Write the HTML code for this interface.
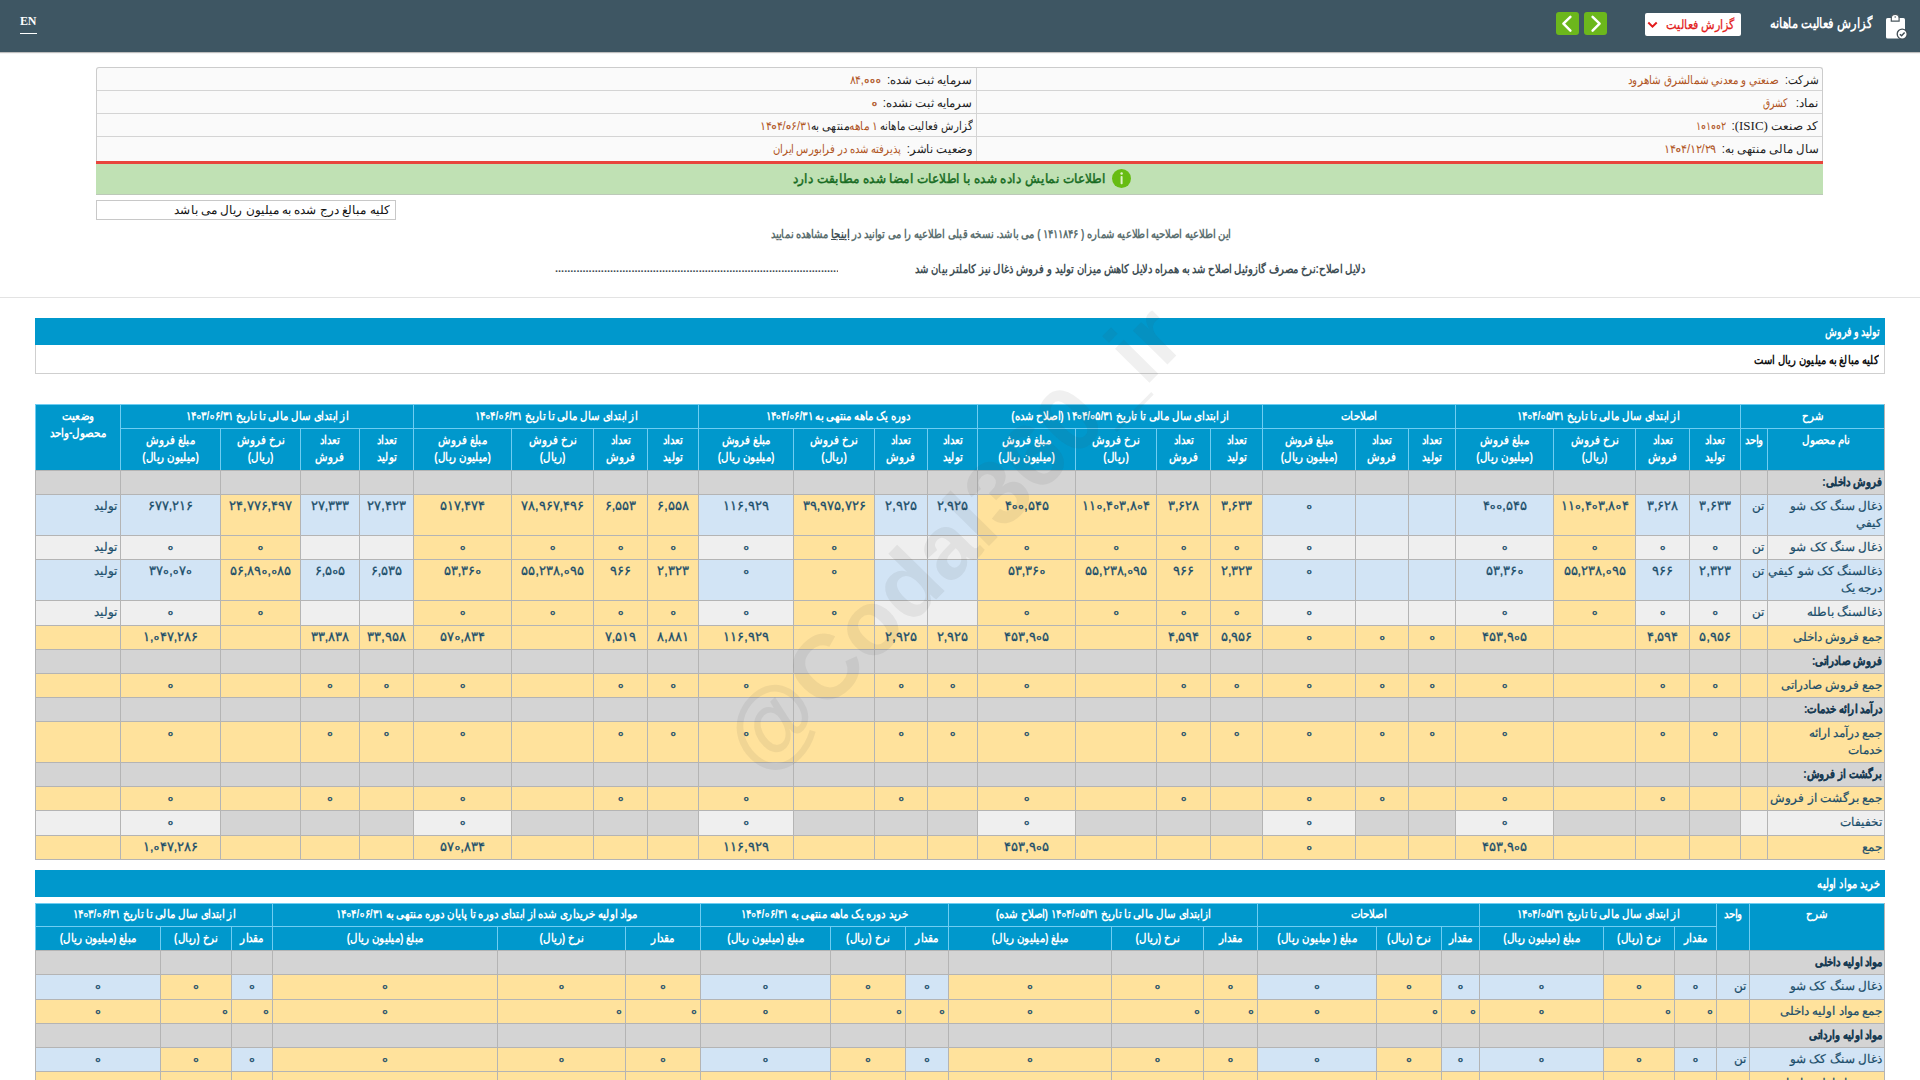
<!DOCTYPE html>
<html lang="fa"><head><meta charset="utf-8"><title>گزارش فعالیت ماهانه</title>
<style>
html,body{margin:0;padding:0}
body{width:1920px;height:1080px;overflow:hidden;background:#fff;position:relative;font-family:"Liberation Sans",sans-serif;font-size:12px;color:#1b4e6a}
#hdr{position:absolute;left:0;top:0;width:1920px;height:52px;background:#3e5663;box-shadow:0 1px 1px rgba(0,0,0,.25)}
#en{position:absolute;left:20px;top:14px;width:16.5px;height:19px;font-family:"Liberation Serif",serif;font-size:12px;font-weight:bold;line-height:15px;color:#fff;border-bottom:1px solid #fff;letter-spacing:-.2px}
#ttl{position:absolute;right:48px;top:13px;height:22px;line-height:22px;color:#fff;font-weight:bold;font-size:13.5px;white-space:nowrap;direction:rtl;transform:scaleX(.83);transform-origin:right center}
#sel{position:absolute;left:1645px;top:13px;width:96px;height:23px;background:#fff;border-radius:2px}
#sel span{position:absolute;right:7px;top:0;line-height:22px;color:#e31b1b;font-size:13px;white-space:nowrap;direction:rtl;transform:scaleX(.87);transform-origin:right center}
.btn{position:absolute;top:12px;width:23px;height:23px;background:#6cb71c;border-radius:3px}
#info{position:absolute;left:96px;top:67px;width:1727px;height:94px;box-sizing:border-box;border:1px solid #ccc;border-bottom:none;border-radius:3px 3px 0 0;background:#fafafa}
#info .r{position:absolute;left:0;width:1725px;height:22px;border-bottom:1px solid #d4d4d4}
#info .v{position:absolute;left:879px;top:0;width:1px;height:93px;background:#d4d4d4}
.f{position:absolute;white-space:nowrap;direction:rtl;line-height:22px;height:22px;color:#222;font-size:12px;transform:scaleX(.86);transform-origin:right center}
.f i{font-style:normal;color:#b0551f}
#red{position:absolute;left:96px;top:161px;width:1727px;height:3px;background:#e8443c}
#grn{position:absolute;left:96px;top:164px;width:1727px;height:31px;box-sizing:border-box;background:#c0e1b4;border-bottom:1px solid #bcc9b8}
#grn .tx{position:absolute;right:718px;top:4px;line-height:22px;white-space:nowrap;direction:rtl;color:#176b22;font-weight:bold;font-size:12.5px;transform:scaleX(.813);transform-origin:right center}
#grn .ic{position:absolute;left:1016px;top:5px;width:19px;height:19px;border-radius:50%;background:#67bc13}
#unit{position:absolute;left:96px;top:200px;width:300px;height:20px;box-sizing:border-box;border:1px solid #c8c8c8;background:#fff}
#unit span{position:absolute;right:5px;top:0;line-height:18px;white-space:nowrap;direction:rtl;color:#111;font-size:12px}
.cl{position:absolute;left:0;width:1920px;text-align:center;direction:rtl;white-space:nowrap;font-weight:bold;font-size:12px;line-height:20px}
.cl span{display:inline-block;transform:scaleX(.833);transform-origin:center}
#hr{position:absolute;left:0;top:297px;width:1920px;height:1px;background:#e3e3e3}
.sec{position:absolute;left:35px;width:1850px;height:27px;background:#0098cc}
.bx2{position:absolute;right:5px;top:3px;line-height:21px;color:#fff;font-weight:bold;font-size:12.5px;white-space:nowrap;direction:rtl;transform:scaleX(.8);transform-origin:right center}
#note{position:absolute;left:35px;top:345px;width:1850px;height:29px;box-sizing:border-box;border:1px solid #cfcfcf;border-top:none;background:#fff}
#note span{position:absolute;right:6px;top:3px;line-height:21px;color:#111;font-weight:bold;font-size:12px;white-space:nowrap;direction:rtl;transform:scaleX(.83);transform-origin:right center}
#t1{position:absolute;left:35px;top:404px;width:1850px}
#t2{position:absolute;left:35px;top:903px;width:1850px}
#sec2{top:870px}
table.t{table-layout:fixed;border-collapse:separate;border-spacing:0;border-right:1px solid #b4b4b4;border-bottom:1px solid #b4b4b4;direction:rtl}
table.t th,table.t td{box-sizing:border-box;border-left:1px solid #b4b4b4;border-top:1px solid #b4b4b4;padding:3px 3px 0 3px;line-height:17px;vertical-align:top;font-size:12px;white-space:nowrap;overflow:visible}
table.t th{background:#0098cc;color:#fff;border-left-color:#6fcdf2;border-top-color:#6fcdf2;font-weight:bold;text-align:center;padding:3px 0 0 0}
.hx{margin:0 -40px;text-align:center;transform:scaleX(.853);transform-origin:center}
td.y{background:#ffe29c}
td.b{background:#d2e4f5}
td.g{background:#d4d4d4}
td.l{background:#efefef}
td.c{text-align:center}
table.t td{-webkit-text-stroke:.2px currentColor}
td.rr{text-align:right}
td.nm{text-align:right;padding-right:0}
td.nm>*{margin-right:-1px}
td.u{text-align:right;padding-right:1px}
td.st{text-align:right}
.d{direction:ltr;unicode-bidi:bidi-override;display:inline-block}
.n{direction:ltr;unicode-bidi:bidi-override;display:inline-block;font-size:12.5px;-webkit-text-stroke:.3px currentColor}
.z{font-style:normal;font-family:"Liberation Sans",sans-serif;font-weight:bold;font-size:8px;line-height:1px;vertical-align:.6px;margin:0 .7px;-webkit-text-stroke:.25px currentColor}
.bx{font-weight:bold;white-space:nowrap;transform:scaleX(.85);transform-origin:right center;color:#173a52}
#wm{position:absolute;left:552px;top:488px;width:800px;height:100px;line-height:100px;text-align:center;font-weight:bold;font-size:91.5px;color:rgba(60,60,60,.08);transform:rotate(-45.5deg);transform-origin:center;white-space:nowrap;pointer-events:none;letter-spacing:0}

.a{position:absolute;line-height:20px;height:20px;white-space:nowrap;direction:rtl;transform-origin:right center}
.sf{font-family:"Liberation Serif",serif;font-size:13px}
.dots{position:absolute;left:555px;top:258px;width:283px;height:20px;line-height:20px;overflow:hidden;text-align:right;font-size:11px;font-weight:bold;direction:ltr;color:#3f4f55;white-space:nowrap}

tr.h1 th{padding-top:2px}

</style></head>
<body>
<div id="hdr">
 <div id="en">EN</div>
 <svg style="position:absolute;left:1883px;top:12px" width="28" height="30" viewBox="0 0 28 30">
  <rect x="3" y="6" width="19" height="20.5" rx="1.6" fill="#fff"/>
  <path d="M8.3 9.2 V6.2 a3.9 3.9 0 0 1 7.8 0 V9.2 Z" fill="#fff" stroke="#4a575e" stroke-width="1.2"/>
  <circle cx="12.2" cy="5" r=".8" fill="#56646b"/>
  <circle cx="19.2" cy="22.1" r="5" fill="#fff" stroke="#414d54" stroke-width="1.3"/>
  <path d="M16.9 22.2 l1.7 1.6 l3-3.2" fill="none" stroke="#414d54" stroke-width="1.5"/>
 </svg>
 <div id="sel">
  <svg style="position:absolute;left:2px;top:8px" width="11" height="8" viewBox="0 0 11 8"><path d="M1.3 1.5 L5.5 5.6 L9.7 1.5" fill="none" stroke="#e31b1b" stroke-width="2"/></svg>
 </div>
 <div class="btn" style="left:1584px"><svg width="23" height="23" viewBox="0 0 23 23"><path d="M8.6 4.8 L15.6 11.6 L8.6 18.6" fill="none" stroke="#fff" stroke-width="2.5" stroke-linecap="round" stroke-linejoin="round"/></svg></div>
 <div class="btn" style="left:1556px"><svg width="23" height="23" viewBox="0 0 23 23"><path d="M14.4 4.8 L7.4 11.6 L14.4 18.6" fill="none" stroke="#fff" stroke-width="2.5" stroke-linecap="round" stroke-linejoin="round"/></svg></div>
</div>
<div id="info">
 <div class="r" style="top:0"></div><div class="r" style="top:23px"></div><div class="r" style="top:46px"></div><div class="r" style="top:69px;border-bottom:none"></div>
 <div class="v"></div>
</div>
<div id="red"></div>
<div id="grn"><div class="ic"><svg width="19" height="19" viewBox="0 0 19 19"><circle cx="9.6" cy="4.6" r="1.25" fill="#dff3c8"/><rect x="8.6" y="7" width="2" height="8.2" rx=".8" fill="#dff3c8"/></svg></div></div>
<div id="unit"></div>
<div class="dots">....................................................................................................</div>
<div id="hr"></div>
<div class="sec" style="top:318px"></div>
<div id="note"></div>

<div id="t1"><table class=t dir=rtl style="width:1850px"><colgroup><col style="width:117px"><col style="width:27px"><col style="width:51px"><col style="width:54px"><col style="width:82px"><col style="width:98px"><col style="width:47px"><col style="width:53px"><col style="width:93px"><col style="width:52px"><col style="width:54px"><col style="width:81px"><col style="width:98px"><col style="width:50px"><col style="width:53px"><col style="width:81px"><col style="width:95px"><col style="width:51px"><col style="width:54px"><col style="width:82px"><col style="width:98px"><col style="width:54px"><col style="width:59px"><col style="width:80px"><col style="width:100px"><col style="width:85px"></colgroup><tr style="height:24px"><th colspan=2><div class="hx ">شرح</div></th><th colspan=4><div class="hx ">از ابتدای سال مالی تا تاریخ <span class=d>۱۴<i class=z>o</i>۴/<i class=z>o</i>۵/۳۱</span></div></th><th colspan=3><div class="hx ">اصلاحات</div></th><th colspan=4><div class="hx ">از ابتدای سال مالی تا تاریخ <span class=d>۱۴<i class=z>o</i>۴/<i class=z>o</i>۵/۳۱</span> (اصلاح شده)</div></th><th colspan=4><div class="hx ">دوره یک ماهه منتهی به <span class=d>۱۴<i class=z>o</i>۴/<i class=z>o</i>۶/۳۱</span></div></th><th colspan=4><div class="hx ">از ابتدای سال مالی تا تاریخ <span class=d>۱۴<i class=z>o</i>۴/<i class=z>o</i>۶/۳۱</span></div></th><th colspan=4><div class="hx ">از ابتدای سال مالی تا تاریخ <span class=d>۱۴<i class=z>o</i>۳/<i class=z>o</i>۶/۳۱</span></div></th><th rowspan=2><div class="hx ">وضعیت<br>محصول-واحد</div></th></tr><tr style="height:42px"><th><div class="hx ">نام محصول</div></th><th><div class="hx ">واحد</div></th><th><div class="hx ">تعداد<br>تولید</div></th><th><div class="hx ">تعداد<br>فروش</div></th><th><div class="hx ">نرخ فروش<br>(ریال)</div></th><th><div class="hx ">مبلغ فروش<br>(میلیون ریال)</div></th><th><div class="hx ">تعداد<br>تولید</div></th><th><div class="hx ">تعداد<br>فروش</div></th><th><div class="hx ">مبلغ فروش<br>(میلیون ریال)</div></th><th><div class="hx ">تعداد<br>تولید</div></th><th><div class="hx ">تعداد<br>فروش</div></th><th><div class="hx ">نرخ فروش<br>(ریال)</div></th><th><div class="hx ">مبلغ فروش<br>(میلیون ریال)</div></th><th><div class="hx ">تعداد<br>تولید</div></th><th><div class="hx ">تعداد<br>فروش</div></th><th><div class="hx ">نرخ فروش<br>(ریال)</div></th><th><div class="hx ">مبلغ فروش<br>(میلیون ریال)</div></th><th><div class="hx ">تعداد<br>تولید</div></th><th><div class="hx ">تعداد<br>فروش</div></th><th><div class="hx ">نرخ فروش<br>(ریال)</div></th><th><div class="hx ">مبلغ فروش<br>(میلیون ریال)</div></th><th><div class="hx ">تعداد<br>تولید</div></th><th><div class="hx ">تعداد<br>فروش</div></th><th><div class="hx ">نرخ فروش<br>(ریال)</div></th><th><div class="hx ">مبلغ فروش<br>(میلیون ریال)</div></th></tr><tr style="height:24px"><td class="g nm"><div class="bx">فروش داخلی:</div></td><td class=g></td><td class=g></td><td class=g></td><td class=g></td><td class=g></td><td class=g></td><td class=g></td><td class=g></td><td class=g></td><td class=g></td><td class=g></td><td class=g></td><td class=g></td><td class=g></td><td class=g></td><td class=g></td><td class=g></td><td class=g></td><td class=g></td><td class=g></td><td class=g></td><td class=g></td><td class=g></td><td class=g></td><td class=g></td></tr><tr style="height:41px"><td class="b nm"><div>ذغال سنگ کک شو<br>کیفي</div></td><td class="b u">تن</td><td class="b c"><span class=n>۳,۶۳۳</span></td><td class="b c"><span class=n>۳,۶۲۸</span></td><td class="y c"><span class=n>۱۱<i class=z>o</i>,۴<i class=z>o</i>۳,۸<i class=z>o</i>۴</span></td><td class="b c"><span class=n>۴<i class=z>o</i><i class=z>o</i>,۵۴۵</span></td><td class="b c"></td><td class="b c"></td><td class="b c"><span class=n><i class=z>o</i></span></td><td class="y c"><span class=n>۳,۶۳۳</span></td><td class="y c"><span class=n>۳,۶۲۸</span></td><td class="y c"><span class=n>۱۱<i class=z>o</i>,۴<i class=z>o</i>۳,۸<i class=z>o</i>۴</span></td><td class="y c"><span class=n>۴<i class=z>o</i><i class=z>o</i>,۵۴۵</span></td><td class="b c"><span class=n>۲,۹۲۵</span></td><td class="b c"><span class=n>۲,۹۲۵</span></td><td class="y c"><span class=n>۳۹,۹۷۵,۷۲۶</span></td><td class="b c"><span class=n>۱۱۶,۹۲۹</span></td><td class="y c"><span class=n>۶,۵۵۸</span></td><td class="y c"><span class=n>۶,۵۵۳</span></td><td class="y c"><span class=n>۷۸,۹۶۷,۴۹۶</span></td><td class="y c"><span class=n>۵۱۷,۴۷۴</span></td><td class="b c"><span class=n>۲۷,۴۲۳</span></td><td class="b c"><span class=n>۲۷,۳۳۳</span></td><td class="y c"><span class=n>۲۴,۷۷۶,۴۹۷</span></td><td class="b c"><span class=n>۶۷۷,۲۱۶</span></td><td class="b st">تولید</td></tr><tr style="height:24px"><td class="l nm"><div>ذغال سنگ کک شو</div></td><td class="l u">تن</td><td class="l c"><span class=n><i class=z>o</i></span></td><td class="l c"><span class=n><i class=z>o</i></span></td><td class="y c"><span class=n><i class=z>o</i></span></td><td class="l c"><span class=n><i class=z>o</i></span></td><td class="l c"></td><td class="l c"></td><td class="l c"><span class=n><i class=z>o</i></span></td><td class="y c"><span class=n><i class=z>o</i></span></td><td class="y c"><span class=n><i class=z>o</i></span></td><td class="y c"><span class=n><i class=z>o</i></span></td><td class="y c"><span class=n><i class=z>o</i></span></td><td class="l c"></td><td class="l c"></td><td class="y c"><span class=n><i class=z>o</i></span></td><td class="l c"><span class=n><i class=z>o</i></span></td><td class="y c"><span class=n><i class=z>o</i></span></td><td class="y c"><span class=n><i class=z>o</i></span></td><td class="y c"><span class=n><i class=z>o</i></span></td><td class="y c"><span class=n><i class=z>o</i></span></td><td class="l c"></td><td class="l c"></td><td class="y c"><span class=n><i class=z>o</i></span></td><td class="l c"><span class=n><i class=z>o</i></span></td><td class="l st">تولید</td></tr><tr style="height:41px"><td class="b nm"><div>ذغالسنگ کک شو کیفي<br>درجه یک</div></td><td class="b u">تن</td><td class="b c"><span class=n>۲,۳۲۳</span></td><td class="b c"><span class=n>۹۶۶</span></td><td class="y c"><span class=n>۵۵,۲۳۸,<i class=z>o</i>۹۵</span></td><td class="b c"><span class=n>۵۳,۳۶<i class=z>o</i></span></td><td class="b c"></td><td class="b c"></td><td class="b c"><span class=n><i class=z>o</i></span></td><td class="y c"><span class=n>۲,۳۲۳</span></td><td class="y c"><span class=n>۹۶۶</span></td><td class="y c"><span class=n>۵۵,۲۳۸,<i class=z>o</i>۹۵</span></td><td class="y c"><span class=n>۵۳,۳۶<i class=z>o</i></span></td><td class="b c"></td><td class="b c"></td><td class="y c"><span class=n><i class=z>o</i></span></td><td class="b c"><span class=n><i class=z>o</i></span></td><td class="y c"><span class=n>۲,۳۲۳</span></td><td class="y c"><span class=n>۹۶۶</span></td><td class="y c"><span class=n>۵۵,۲۳۸,<i class=z>o</i>۹۵</span></td><td class="y c"><span class=n>۵۳,۳۶<i class=z>o</i></span></td><td class="b c"><span class=n>۶,۵۳۵</span></td><td class="b c"><span class=n>۶,۵<i class=z>o</i>۵</span></td><td class="y c"><span class=n>۵۶,۸۹<i class=z>o</i>,<i class=z>o</i>۸۵</span></td><td class="b c"><span class=n>۳۷<i class=z>o</i>,<i class=z>o</i>۷<i class=z>o</i></span></td><td class="b st">تولید</td></tr><tr style="height:25px"><td class="l nm"><div>ذغالسنگ باطله</div></td><td class="l u">تن</td><td class="l c"><span class=n><i class=z>o</i></span></td><td class="l c"><span class=n><i class=z>o</i></span></td><td class="y c"><span class=n><i class=z>o</i></span></td><td class="l c"><span class=n><i class=z>o</i></span></td><td class="l c"></td><td class="l c"></td><td class="l c"><span class=n><i class=z>o</i></span></td><td class="y c"><span class=n><i class=z>o</i></span></td><td class="y c"><span class=n><i class=z>o</i></span></td><td class="y c"><span class=n><i class=z>o</i></span></td><td class="y c"><span class=n><i class=z>o</i></span></td><td class="l c"></td><td class="l c"></td><td class="y c"><span class=n><i class=z>o</i></span></td><td class="l c"><span class=n><i class=z>o</i></span></td><td class="y c"><span class=n><i class=z>o</i></span></td><td class="y c"><span class=n><i class=z>o</i></span></td><td class="y c"><span class=n><i class=z>o</i></span></td><td class="y c"><span class=n><i class=z>o</i></span></td><td class="l c"></td><td class="l c"></td><td class="y c"><span class=n><i class=z>o</i></span></td><td class="l c"><span class=n><i class=z>o</i></span></td><td class="l st">تولید</td></tr><tr style="height:24px"><td class="y nm"><div>جمع فروش داخلی</div></td><td class="y "></td><td class="y c"><span class=n>۵,۹۵۶</span></td><td class="y c"><span class=n>۴,۵۹۴</span></td><td class="y c"></td><td class="y c"><span class=n>۴۵۳,۹<i class=z>o</i>۵</span></td><td class="y c"><span class=n><i class=z>o</i></span></td><td class="y c"><span class=n><i class=z>o</i></span></td><td class="y c"><span class=n><i class=z>o</i></span></td><td class="y c"><span class=n>۵,۹۵۶</span></td><td class="y c"><span class=n>۴,۵۹۴</span></td><td class="y c"></td><td class="y c"><span class=n>۴۵۳,۹<i class=z>o</i>۵</span></td><td class="y c"><span class=n>۲,۹۲۵</span></td><td class="y c"><span class=n>۲,۹۲۵</span></td><td class="y c"></td><td class="y c"><span class=n>۱۱۶,۹۲۹</span></td><td class="y c"><span class=n>۸,۸۸۱</span></td><td class="y c"><span class=n>۷,۵۱۹</span></td><td class="y c"></td><td class="y c"><span class=n>۵۷<i class=z>o</i>,۸۳۴</span></td><td class="y c"><span class=n>۳۳,۹۵۸</span></td><td class="y c"><span class=n>۳۳,۸۳۸</span></td><td class="y c"></td><td class="y c"><span class=n>۱,<i class=z>o</i>۴۷,۲۸۶</span></td><td class="y "></td></tr><tr style="height:24px"><td class="g nm"><div class="bx">فروش صادراتی:</div></td><td class=g></td><td class=g></td><td class=g></td><td class=g></td><td class=g></td><td class=g></td><td class=g></td><td class=g></td><td class=g></td><td class=g></td><td class=g></td><td class=g></td><td class=g></td><td class=g></td><td class=g></td><td class=g></td><td class=g></td><td class=g></td><td class=g></td><td class=g></td><td class=g></td><td class=g></td><td class=g></td><td class=g></td><td class=g></td></tr><tr style="height:24px"><td class="y nm"><div>جمع فروش صادراتی</div></td><td class="y "></td><td class="y c"><span class=n><i class=z>o</i></span></td><td class="y c"><span class=n><i class=z>o</i></span></td><td class="y c"></td><td class="y c"><span class=n><i class=z>o</i></span></td><td class="y c"><span class=n><i class=z>o</i></span></td><td class="y c"><span class=n><i class=z>o</i></span></td><td class="y c"><span class=n><i class=z>o</i></span></td><td class="y c"><span class=n><i class=z>o</i></span></td><td class="y c"><span class=n><i class=z>o</i></span></td><td class="y c"></td><td class="y c"><span class=n><i class=z>o</i></span></td><td class="y c"><span class=n><i class=z>o</i></span></td><td class="y c"><span class=n><i class=z>o</i></span></td><td class="y c"></td><td class="y c"><span class=n><i class=z>o</i></span></td><td class="y c"><span class=n><i class=z>o</i></span></td><td class="y c"><span class=n><i class=z>o</i></span></td><td class="y c"></td><td class="y c"><span class=n><i class=z>o</i></span></td><td class="y c"><span class=n><i class=z>o</i></span></td><td class="y c"><span class=n><i class=z>o</i></span></td><td class="y c"></td><td class="y c"><span class=n><i class=z>o</i></span></td><td class="y "></td></tr><tr style="height:24px"><td class="g nm"><div class="bx">درآمد ارائه خدمات:</div></td><td class=g></td><td class=g></td><td class=g></td><td class=g></td><td class=g></td><td class=g></td><td class=g></td><td class=g></td><td class=g></td><td class=g></td><td class=g></td><td class=g></td><td class=g></td><td class=g></td><td class=g></td><td class=g></td><td class=g></td><td class=g></td><td class=g></td><td class=g></td><td class=g></td><td class=g></td><td class=g></td><td class=g></td><td class=g></td></tr><tr style="height:41px"><td class="y nm"><div>جمع درآمد ارائه<br>خدمات</div></td><td class="y "></td><td class="y c"><span class=n><i class=z>o</i></span></td><td class="y c"><span class=n><i class=z>o</i></span></td><td class="y c"></td><td class="y c"><span class=n><i class=z>o</i></span></td><td class="y c"><span class=n><i class=z>o</i></span></td><td class="y c"><span class=n><i class=z>o</i></span></td><td class="y c"><span class=n><i class=z>o</i></span></td><td class="y c"><span class=n><i class=z>o</i></span></td><td class="y c"><span class=n><i class=z>o</i></span></td><td class="y c"></td><td class="y c"><span class=n><i class=z>o</i></span></td><td class="y c"><span class=n><i class=z>o</i></span></td><td class="y c"><span class=n><i class=z>o</i></span></td><td class="y c"></td><td class="y c"><span class=n><i class=z>o</i></span></td><td class="y c"><span class=n><i class=z>o</i></span></td><td class="y c"><span class=n><i class=z>o</i></span></td><td class="y c"></td><td class="y c"><span class=n><i class=z>o</i></span></td><td class="y c"><span class=n><i class=z>o</i></span></td><td class="y c"><span class=n><i class=z>o</i></span></td><td class="y c"></td><td class="y c"><span class=n><i class=z>o</i></span></td><td class="y "></td></tr><tr style="height:24px"><td class="g nm"><div class="bx">برگشت از فروش:</div></td><td class=g></td><td class=g></td><td class=g></td><td class=g></td><td class=g></td><td class=g></td><td class=g></td><td class=g></td><td class=g></td><td class=g></td><td class=g></td><td class=g></td><td class=g></td><td class=g></td><td class=g></td><td class=g></td><td class=g></td><td class=g></td><td class=g></td><td class=g></td><td class=g></td><td class=g></td><td class=g></td><td class=g></td><td class=g></td></tr><tr style="height:24px"><td class="y nm"><div>جمع برگشت از فروش</div></td><td class="y "></td><td class="y c"></td><td class="y c"><span class=n><i class=z>o</i></span></td><td class="y c"></td><td class="y c"><span class=n><i class=z>o</i></span></td><td class="y c"></td><td class="y c"><span class=n><i class=z>o</i></span></td><td class="y c"><span class=n><i class=z>o</i></span></td><td class="y c"></td><td class="y c"><span class=n><i class=z>o</i></span></td><td class="y c"></td><td class="y c"><span class=n><i class=z>o</i></span></td><td class="y c"></td><td class="y c"><span class=n><i class=z>o</i></span></td><td class="y c"></td><td class="y c"><span class=n><i class=z>o</i></span></td><td class="y c"></td><td class="y c"><span class=n><i class=z>o</i></span></td><td class="y c"></td><td class="y c"><span class=n><i class=z>o</i></span></td><td class="y c"></td><td class="y c"><span class=n><i class=z>o</i></span></td><td class="y c"></td><td class="y c"><span class=n><i class=z>o</i></span></td><td class="y "></td></tr><tr style="height:25px"><td class="l nm"><div>تخفیفات</div></td><td class="l "></td><td class="g "></td><td class="g "></td><td class="g "></td><td class="l c"><span class=n><i class=z>o</i></span></td><td class="g "></td><td class="g "></td><td class="l c"><span class=n><i class=z>o</i></span></td><td class="g "></td><td class="g "></td><td class="g "></td><td class="l c"><span class=n><i class=z>o</i></span></td><td class="g "></td><td class="g "></td><td class="g "></td><td class="l c"><span class=n><i class=z>o</i></span></td><td class="g "></td><td class="g "></td><td class="g "></td><td class="l c"><span class=n><i class=z>o</i></span></td><td class="g "></td><td class="g "></td><td class="g "></td><td class="l c"><span class=n><i class=z>o</i></span></td><td class="l "></td></tr><tr style="height:24px"><td class="y nm"><div>جمع</div></td><td class="y "></td><td class="y c"></td><td class="y c"></td><td class="y c"></td><td class="y c"><span class=n>۴۵۳,۹<i class=z>o</i>۵</span></td><td class="y c"></td><td class="y c"></td><td class="y c"><span class=n><i class=z>o</i></span></td><td class="y c"></td><td class="y c"></td><td class="y c"></td><td class="y c"><span class=n>۴۵۳,۹<i class=z>o</i>۵</span></td><td class="y c"></td><td class="y c"></td><td class="y c"></td><td class="y c"><span class=n>۱۱۶,۹۲۹</span></td><td class="y c"></td><td class="y c"></td><td class="y c"></td><td class="y c"><span class=n>۵۷<i class=z>o</i>,۸۳۴</span></td><td class="y c"></td><td class="y c"></td><td class="y c"></td><td class="y c"><span class=n>۱,<i class=z>o</i>۴۷,۲۸۶</span></td><td class="y "></td></tr></table></div>
<div id="sec2" class="sec"></div>
<div id="t2"><table class=t dir=rtl style="width:1850px"><colgroup><col style="width:135px"><col style="width:33px"><col style="width:42px"><col style="width:71px"><col style="width:124px"><col style="width:38px"><col style="width:65px"><col style="width:119px"><col style="width:54px"><col style="width:92px"><col style="width:163px"><col style="width:43px"><col style="width:75px"><col style="width:130px"><col style="width:75px"><col style="width:128px"><col style="width:225px"><col style="width:41px"><col style="width:71px"><col style="width:125px"></colgroup><tr class=h1 style="height:23px"><th rowspan=2><div class="hx ">شرح</div></th><th rowspan=2><div class="hx ">واحد</div></th><th colspan=3><div class="hx ">از ابتدای سال مالی تا تاریخ <span class=d>۱۴<i class=z>o</i>۴/<i class=z>o</i>۵/۳۱</span></div></th><th colspan=3><div class="hx ">اصلاحات</div></th><th colspan=3><div class="hx ">ازابتدای سال مالی تا تاریخ <span class=d>۱۴<i class=z>o</i>۴/<i class=z>o</i>۵/۳۱</span> (اصلاح شده)</div></th><th colspan=3><div class="hx ">خرید دوره یک ماهه منتهی به <span class=d>۱۴<i class=z>o</i>۴/<i class=z>o</i>۶/۳۱</span></div></th><th colspan=3><div class="hx ">مواد اولیه خریداری شده از ابتدای دوره تا پایان دوره منتهی به <span class=d>۱۴<i class=z>o</i>۴/<i class=z>o</i>۶/۳۱</span></div></th><th colspan=3><div class="hx ">از ابتدای سال مالی تا تاریخ <span class=d>۱۴<i class=z>o</i>۳/<i class=z>o</i>۶/۳۱</span></div></th></tr><tr style="height:24px"><th><div class="hx ">مقدار</div></th><th><div class="hx ">نرخ (ریال)</div></th><th><div class="hx ">مبلغ (میلیون ریال)</div></th><th><div class="hx ">مقدار</div></th><th><div class="hx ">نرخ (ریال)</div></th><th><div class="hx ">مبلغ ( میلیون ریال)</div></th><th><div class="hx ">مقدار</div></th><th><div class="hx ">نرخ (ریال)</div></th><th><div class="hx ">مبلغ (میلیون ریال)</div></th><th><div class="hx ">مقدار</div></th><th><div class="hx ">نرخ (ریال)</div></th><th><div class="hx ">مبلغ (میلیون ریال)</div></th><th><div class="hx ">مقدار</div></th><th><div class="hx ">نرخ (ریال)</div></th><th><div class="hx ">مبلغ (میلیون ریال)</div></th><th><div class="hx ">مقدار</div></th><th><div class="hx ">نرخ (ریال)</div></th><th><div class="hx ">مبلغ (میلیون ریال)</div></th></tr><tr style="height:24px"><td class="g nm"><div class="bx">مواد اولیه داخلی</div></td><td class=g></td><td class=g></td><td class=g></td><td class=g></td><td class=g></td><td class=g></td><td class=g></td><td class=g></td><td class=g></td><td class=g></td><td class=g></td><td class=g></td><td class=g></td><td class=g></td><td class=g></td><td class=g></td><td class=g></td><td class=g></td><td class=g></td></tr><tr style="height:25px"><td class="b nm"><div>ذغال سنگ کک شو</div></td><td class="b u">تن</td><td class="b c"><span class=n><i class=z>o</i></span></td><td class="y c"><span class=n><i class=z>o</i></span></td><td class="b c"><span class=n><i class=z>o</i></span></td><td class="b c"><span class=n><i class=z>o</i></span></td><td class="y c"><span class=n><i class=z>o</i></span></td><td class="b c"><span class=n><i class=z>o</i></span></td><td class="y c"><span class=n><i class=z>o</i></span></td><td class="y c"><span class=n><i class=z>o</i></span></td><td class="y c"><span class=n><i class=z>o</i></span></td><td class="b c"><span class=n><i class=z>o</i></span></td><td class="y c"><span class=n><i class=z>o</i></span></td><td class="b c"><span class=n><i class=z>o</i></span></td><td class="y c"><span class=n><i class=z>o</i></span></td><td class="y c"><span class=n><i class=z>o</i></span></td><td class="y c"><span class=n><i class=z>o</i></span></td><td class="b c"><span class=n><i class=z>o</i></span></td><td class="y c"><span class=n><i class=z>o</i></span></td><td class="b c"><span class=n><i class=z>o</i></span></td></tr><tr style="height:24px"><td class="y nm"><div>جمع مواد اولیه داخلی</div></td><td class="y "></td><td class="y rr"><span class=n><i class=z>o</i></span></td><td class="y rr"><span class=n><i class=z>o</i></span></td><td class="y c"><span class=n><i class=z>o</i></span></td><td class="y rr"><span class=n><i class=z>o</i></span></td><td class="y rr"><span class=n><i class=z>o</i></span></td><td class="y c"><span class=n><i class=z>o</i></span></td><td class="y rr"><span class=n><i class=z>o</i></span></td><td class="y rr"><span class=n><i class=z>o</i></span></td><td class="y c"><span class=n><i class=z>o</i></span></td><td class="y rr"><span class=n><i class=z>o</i></span></td><td class="y rr"><span class=n><i class=z>o</i></span></td><td class="y c"><span class=n><i class=z>o</i></span></td><td class="y rr"><span class=n><i class=z>o</i></span></td><td class="y rr"><span class=n><i class=z>o</i></span></td><td class="y c"><span class=n><i class=z>o</i></span></td><td class="y rr"><span class=n><i class=z>o</i></span></td><td class="y rr"><span class=n><i class=z>o</i></span></td><td class="y c"><span class=n><i class=z>o</i></span></td></tr><tr style="height:24px"><td class="g nm"><div class="bx">مواد اولیه وارداتی</div></td><td class=g></td><td class=g></td><td class=g></td><td class=g></td><td class=g></td><td class=g></td><td class=g></td><td class=g></td><td class=g></td><td class=g></td><td class=g></td><td class=g></td><td class=g></td><td class=g></td><td class=g></td><td class=g></td><td class=g></td><td class=g></td><td class=g></td></tr><tr style="height:24px"><td class="b nm"><div>ذغال سنگ کک شو</div></td><td class="b u">تن</td><td class="b c"><span class=n><i class=z>o</i></span></td><td class="y c"><span class=n><i class=z>o</i></span></td><td class="b c"><span class=n><i class=z>o</i></span></td><td class="b c"><span class=n><i class=z>o</i></span></td><td class="y c"><span class=n><i class=z>o</i></span></td><td class="b c"><span class=n><i class=z>o</i></span></td><td class="y c"><span class=n><i class=z>o</i></span></td><td class="y c"><span class=n><i class=z>o</i></span></td><td class="y c"><span class=n><i class=z>o</i></span></td><td class="b c"><span class=n><i class=z>o</i></span></td><td class="y c"><span class=n><i class=z>o</i></span></td><td class="b c"><span class=n><i class=z>o</i></span></td><td class="y c"><span class=n><i class=z>o</i></span></td><td class="y c"><span class=n><i class=z>o</i></span></td><td class="y c"><span class=n><i class=z>o</i></span></td><td class="b c"><span class=n><i class=z>o</i></span></td><td class="y c"><span class=n><i class=z>o</i></span></td><td class="b c"><span class=n><i class=z>o</i></span></td></tr><tr style="height:24px"><td class="y nm"><div>جمع مواد اولیه وارداتی</div></td><td class="y "></td><td class="y rr"><span class=n><i class=z>o</i></span></td><td class="y rr"><span class=n><i class=z>o</i></span></td><td class="y c"><span class=n><i class=z>o</i></span></td><td class="y rr"><span class=n><i class=z>o</i></span></td><td class="y rr"><span class=n><i class=z>o</i></span></td><td class="y c"><span class=n><i class=z>o</i></span></td><td class="y rr"><span class=n><i class=z>o</i></span></td><td class="y rr"><span class=n><i class=z>o</i></span></td><td class="y c"><span class=n><i class=z>o</i></span></td><td class="y rr"><span class=n><i class=z>o</i></span></td><td class="y rr"><span class=n><i class=z>o</i></span></td><td class="y c"><span class=n><i class=z>o</i></span></td><td class="y rr"><span class=n><i class=z>o</i></span></td><td class="y rr"><span class=n><i class=z>o</i></span></td><td class="y c"><span class=n><i class=z>o</i></span></td><td class="y rr"><span class=n><i class=z>o</i></span></td><td class="y rr"><span class=n><i class=z>o</i></span></td><td class="y c"><span class=n><i class=z>o</i></span></td></tr></table></div>
<span class=a style="right:47.5px;top:14.0px;font-size:13.5px;font-weight:bold;color:#fff;transform:scaleX(0.8197);">گزارش فعالیت ماهانه</span>
<span class=a style="right:185.4px;top:14.5px;font-size:12.5px;font-weight:normal;color:#e31b1b;transform:scaleX(0.8575);-webkit-text-stroke:.25px #e31b1b">گزارش فعالیت</span>
<span class=a style="right:102.0px;top:69.5px;font-size:12px;font-weight:normal;color:#222;transform:scaleX(0.8684);">شرکت:</span>
<span class=a style="right:142.0px;top:69.5px;font-size:12px;font-weight:normal;color:#b0551f;transform:scaleX(0.8613);">صنعتي و معدني شمالشرق شاهرود</span>
<span class=a style="right:102.0px;top:92.5px;font-size:12px;font-weight:normal;color:#222;transform:scaleX(1.0000);">نماد:</span>
<span class=a style="right:131.6px;top:92.5px;font-size:12px;font-weight:normal;color:#b0551f;transform:scaleX(0.7697);">کشرق</span>
<span class=a style="right:102.0px;top:115.5px;font-size:12px;font-weight:normal;color:#222;transform:scaleX(0.9953);">کد صنعت <span class=sf>(ISIC)</span>:</span>
<span class=a style="right:194.6px;top:115.5px;font-size:12px;font-weight:normal;color:#b0551f;transform:scaleX(0.8054);"><span class=d>۱<i class=z>o</i>۱<i class=z>o</i><i class=z>o</i>۲</span></span>
<span class=a style="right:102.0px;top:138.5px;font-size:12px;font-weight:normal;color:#222;transform:scaleX(0.9735);">سال مالی منتهی به:</span>
<span class=a style="right:204.2px;top:138.5px;font-size:12px;font-weight:normal;color:#b0551f;transform:scaleX(0.9463);"><span class=d>۱۴<i class=z>o</i>۴/۱۲/۲۹</span></span>
<span class=a style="right:947.8px;top:69.5px;font-size:12px;font-weight:normal;color:#222;transform:scaleX(0.9756);">سرمایه ثبت شده:</span>
<span class=a style="right:1039.1px;top:69.5px;font-size:12px;font-weight:normal;color:#b0551f;transform:scaleX(0.9176);"><span class=d>۸۴,<i class=z>o</i><i class=z>o</i><i class=z>o</i></span></span>
<span class=a style="right:947.8px;top:92.5px;font-size:12px;font-weight:normal;color:#222;transform:scaleX(0.9800);">سرمایه ثبت نشده:</span>
<span class=a style="right:1042.4px;top:92.5px;font-size:12px;font-weight:normal;color:#b0551f;transform:scaleX(1.0000);"><span class=d><i class=z>o</i></span></span>
<span class=a style="right:947.8px;top:115.5px;font-size:12px;font-weight:normal;color:#222;transform:scaleX(0.8491);">گزارش فعالیت ماهانه</span>
<span class=a style="right:1042.7px;top:115.5px;font-size:12px;font-weight:normal;color:#b0551f;transform:scaleX(0.8903);"><span class=d>۱</span> ماهه</span>
<span class=a style="right:1070.3px;top:115.5px;font-size:12px;font-weight:normal;color:#222;transform:scaleX(0.9048);">منتهی به</span>
<span class=a style="right:1109.0px;top:115.5px;font-size:12px;font-weight:normal;color:#b0551f;transform:scaleX(0.9273);"><span class=d>۱۴<i class=z>o</i>۴/<i class=z>o</i>۶/۳۱</span></span>
<span class=a style="right:947.8px;top:138.5px;font-size:12px;font-weight:normal;color:#222;transform:scaleX(0.9588);">وضعیت ناشر:</span>
<span class=a style="right:1020.0px;top:138.5px;font-size:12px;font-weight:normal;color:#b0551f;transform:scaleX(0.8384);">پذیرفته شده در فرابورس ایران</span>
<span class=a style="right:814.5px;top:168.5px;font-size:13px;font-weight:normal;color:#176b22;transform:scaleX(0.9294);-webkit-text-stroke:.45px #176b22">اطلاعات نمایش داده شده با اطلاعات امضا شده مطابقت دارد</span>
<span class=a style="right:1530.0px;top:200.0px;font-size:12px;font-weight:normal;color:#111;transform:scaleX(1.0024);">کلیه مبالغ درج شده به میلیون ریال می باشد</span>
<span class=a style="right:689.0px;top:223.5px;font-size:12px;font-weight:bold;color:#5c7070;transform:scaleX(0.8326);">این اطلاعیه اصلاحیه اطلاعیه شماره ( <span class=d>۱۴۱۱۸۴۶</span> ) می باشد. نسخه قبلی اطلاعیه را می توانید در <u style="color:#3f4f55">اینجا</u> مشاهده نمایید</span>
<span class=a style="right:555.0px;top:258.5px;font-size:12px;font-weight:bold;color:#3f4f55;transform:scaleX(0.8325);">دلایل اصلاح:نرخ مصرف گازوئیل اصلاح شد به همراه دلایل کاهش میزان تولید و فروش ذغال نیز کاملتر بیان شد</span>
<span class=a style="right:40.0px;top:321.5px;font-size:12.5px;font-weight:bold;color:#fff;transform:scaleX(0.7389);">تولید و فروش</span>
<span class=a style="right:41.0px;top:349.5px;font-size:12px;font-weight:bold;color:#111;transform:scaleX(0.8333);">کلیه مبالغ به میلیون ریال است</span>
<span class=a style="right:40.0px;top:873.5px;font-size:12.5px;font-weight:bold;color:#fff;transform:scaleX(0.7632);">خرید مواد اولیه</span>

<div id="wm">@Codal360_ir</div>
</body></html>
